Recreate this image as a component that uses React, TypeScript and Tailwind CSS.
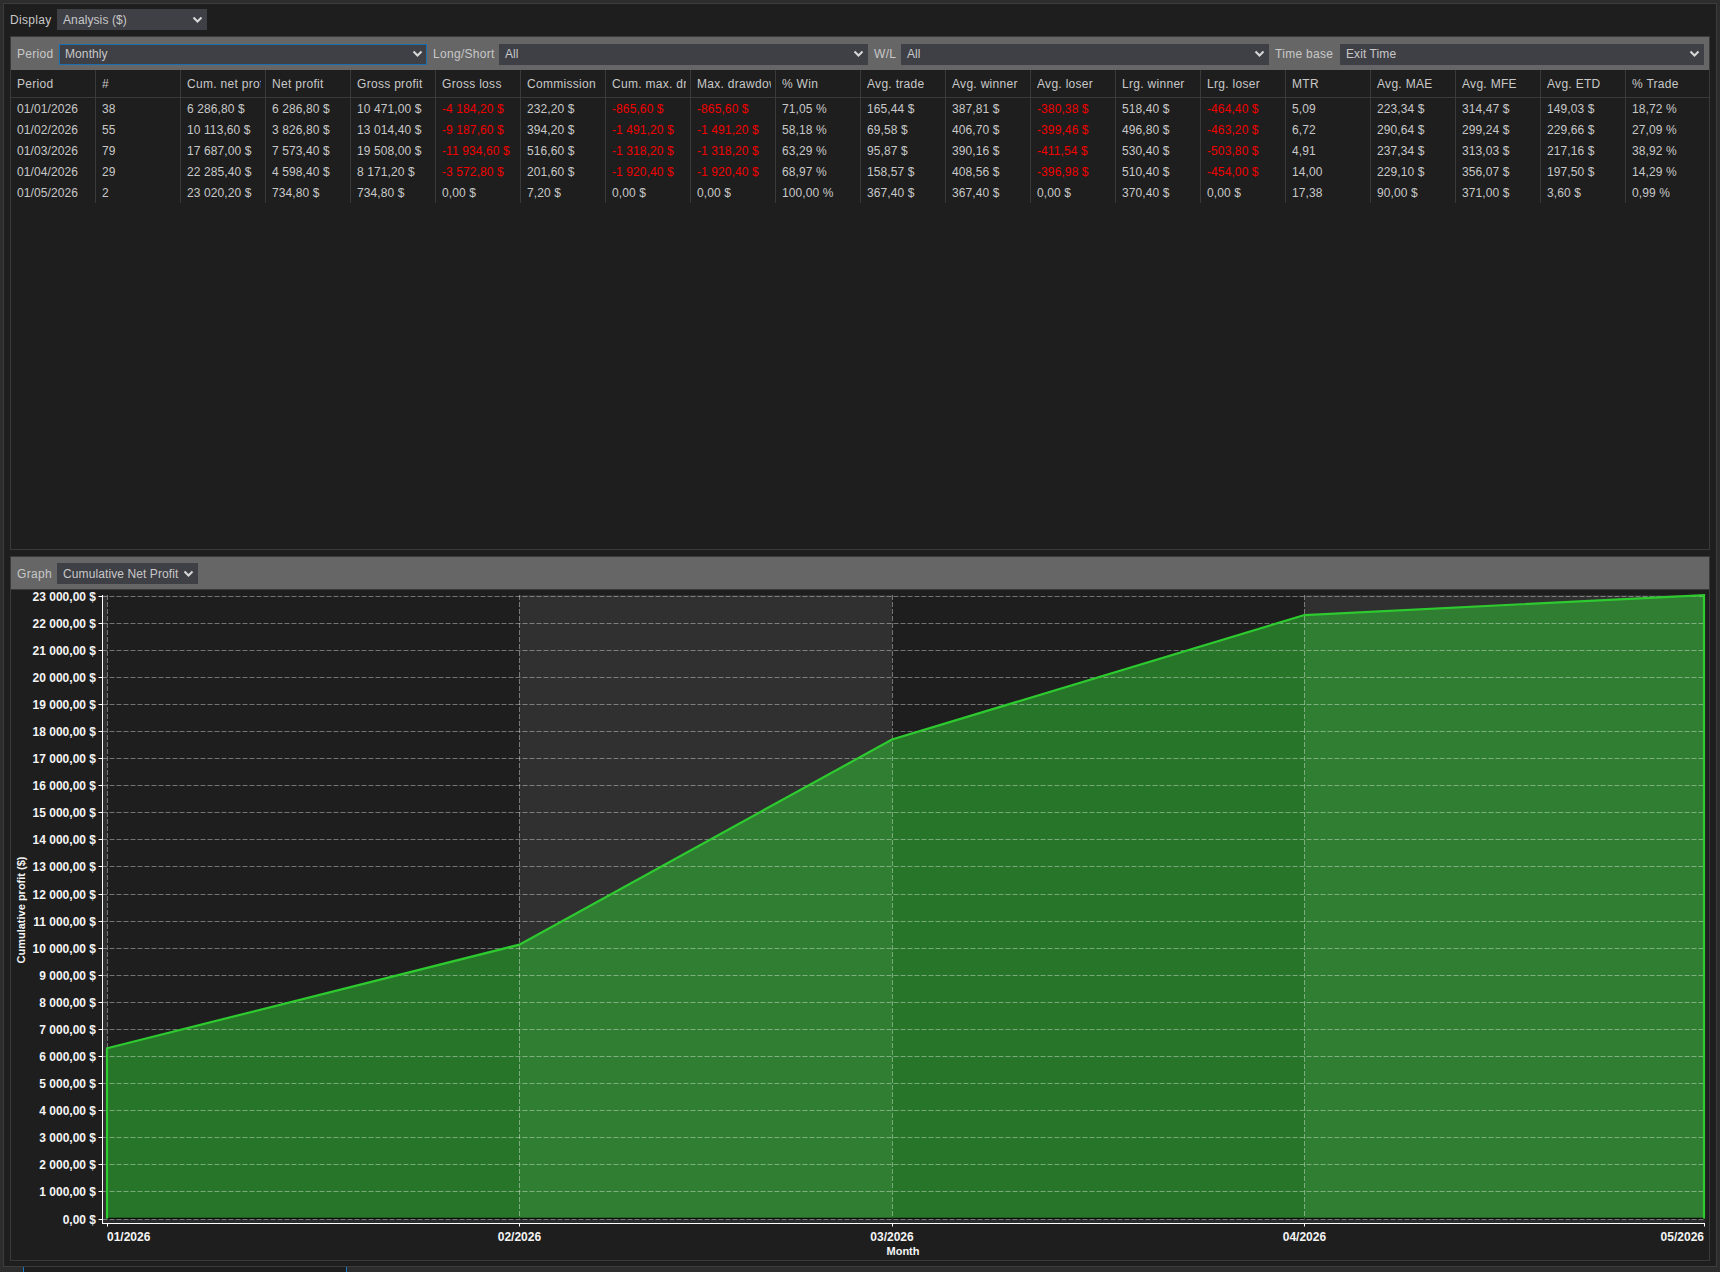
import React from 'react';

type Cell = string;

const columns: string[] = [
    'Period', '#', 'Cum. net profit', 'Net profit', 'Gross profit', 'Gross loss', 'Commission', 'Cum. max. drawdown', 'Max. drawdown', '% Win',
    'Avg. trade', 'Avg. winner', 'Avg. loser', 'Lrg. winner', 'Lrg. loser', 'MTR', 'Avg. MAE', 'Avg. MFE', 'Avg. ETD', '% Trade',
];

const rows: Cell[][] = [
    ['01/01/2026', '38', '6 286,80 $', '6 286,80 $', '10 471,00 $', '-4 184,20 $', '232,20 $', '-865,60 $', '-865,60 $', '71,05 %', '165,44 $', '387,81 $', '-380,38 $', '518,40 $', '-464,40 $', '5,09', '223,34 $', '314,47 $', '149,03 $', '18,72 %'],
    ['01/02/2026', '55', '10 113,60 $', '3 826,80 $', '13 014,40 $', '-9 187,60 $', '394,20 $', '-1 491,20 $', '-1 491,20 $', '58,18 %', '69,58 $', '406,70 $', '-399,46 $', '496,80 $', '-463,20 $', '6,72', '290,64 $', '299,24 $', '229,66 $', '27,09 %'],
    ['01/03/2026', '79', '17 687,00 $', '7 573,40 $', '19 508,00 $', '-11 934,60 $', '516,60 $', '-1 318,20 $', '-1 318,20 $', '63,29 %', '95,87 $', '390,16 $', '-411,54 $', '530,40 $', '-503,80 $', '4,91', '237,34 $', '313,03 $', '217,16 $', '38,92 %'],
    ['01/04/2026', '29', '22 285,40 $', '4 598,40 $', '8 171,20 $', '-3 572,80 $', '201,60 $', '-1 920,40 $', '-1 920,40 $', '68,97 %', '158,57 $', '408,56 $', '-396,98 $', '510,40 $', '-454,00 $', '14,00', '229,10 $', '356,07 $', '197,50 $', '14,29 %'],
    ['01/05/2026', '2', '23 020,20 $', '734,80 $', '734,80 $', '0,00 $', '7,20 $', '0,00 $', '0,00 $', '100,00 %', '367,40 $', '367,40 $', '0,00 $', '370,40 $', '0,00 $', '17,38', '90,00 $', '371,00 $', '3,60 $', '0,99 %'],
];

// chart geometry, measured on the plot
const plotLeft = 103;
const plotRight = 1705;
const plotTop = 595;
const zeroY = 1218.5;
const axisY = 1223.5;
const axisX = 102.5;
const monthX = [107, 519.4, 892, 1304.4, 1704];
const monthLabels = ['01/2026', '02/2026', '03/2026', '04/2026', '05/2026'];
const cumulative = [6286.8, 10113.6, 17687, 22285.4, 23020.2];
const svgLeft = 11;
const svgTop = 590;

const yOf = (v: number) => zeroY - (v * (zeroY - 595.7)) / 23000;
const ticks = Array.from({ length: 24 }, (_, i) => i * 1000);
const tickLabel = (v: number) => (v === 0 ? '0,00 $' : `${v / 1000} 000,00 $`);

const Chevron = () => (
    <svg width="11" height="8" viewBox="0 0 11 8" className="shrink-0">
        <path d="M1.5 1.5 L5.5 5.5 L9.5 1.5" fill="none" stroke="#d8d8d8" strokeWidth="2" />
    </svg>
);

function Select({ label, className, active }: { label: string; className: string; active?: boolean }) {
    return (
        <div
            className={`flex h-[21px] items-center justify-between bg-[#3f3f46] text-[12px] text-[#c8c8c8] ${className} ${
                active ? 'border border-[#1a6fb0] pl-[5px] pr-[3px]' : 'pl-[6px] pr-[4px]'
            }`}
        >
            <span className="whitespace-nowrap tracking-[0.1px]">{label}</span>
            <Chevron />
        </div>
    );
}

function Label({ children, className }: { children: React.ReactNode; className: string }) {
    return <span className={`whitespace-nowrap text-[12px] tracking-[0.3px] ${className}`}>{children}</span>;
}

function Table() {
    return (
        <div className="h-[479px] w-full overflow-hidden">
            <div className="flex h-[28px] border-b border-[#3a3a3a]">
                {columns.map((c) => (
                    <div key={c} className="flex w-[85px] shrink-0 items-center border-r border-[#3a3a3a] pl-[6px] pr-[4px] text-[12px] tracking-[0.3px] text-[#c8c8c8] last:border-r-0">
                        <div className="overflow-hidden whitespace-nowrap">{c}</div>
                    </div>
                ))}
            </div>
            {rows.map((row) => (
                <div key={row[0]} className="flex h-[21px]">
                    {row.map((cell, i) => (
                        <div
                            key={i}
                            className={`flex w-[85px] shrink-0 items-center border-r border-[#3a3a3a] pl-[6px] text-[12px] tracking-[0.1px] last:border-r-0 ${
                                cell.startsWith('-') ? 'text-[#f00000]' : 'text-[#c8c8c8]'
                            }`}
                        >
                            <span className="whitespace-nowrap">{cell}</span>
                        </div>
                    ))}
                </div>
            ))}
        </div>
    );
}

function Chart() {
    const y = (v: number) => yOf(v);
    const xs = monthX;
    const line = cumulative.map((v, i) => `${xs[i]},${y(v)}`).join(' ');
    const area = `${xs[0]},${zeroY} ${line} ${xs[4]},${zeroY}`;
    return (
        <svg width="1698" height="670" viewBox={`${svgLeft} ${svgTop} 1698 670`} className="block" fontFamily="'Liberation Sans', Arial, sans-serif">
            {/* alternating month bands */}
            <rect x={xs[1]} y={plotTop} width={xs[2] - xs[1]} height={axisY - plotTop} fill="#303030" />
            <rect x={xs[3]} y={plotTop} width={plotRight - xs[3]} height={axisY - plotTop} fill="#303030" />
            <rect x={plotLeft} y={plotTop} width={xs[0] - plotLeft} height={axisY - plotTop} fill="#303030" />
            <rect x={plotLeft} y={zeroY} width={plotRight - plotLeft} height={axisY - zeroY} fill="#2c2c2c" />

            {/* green area */}
            <polygon points={area} fill="#30cc32" fillOpacity="0.5" />
            <line x1={xs[0]} y1={zeroY} x2={xs[4]} y2={zeroY} stroke="#0c0c0c" strokeWidth="1.5" />

            {/* grid */}
            {ticks.map((t) => (
                <line key={t} x1={axisX} x2={plotRight - 1} y1={Math.round(y(t)) + 0.5} y2={Math.round(y(t)) + 0.5} stroke="#ffffff" strokeOpacity="0.38" strokeDasharray="5 2" />
            ))}
            {xs.slice(0, 4).map((x) => (
                <line key={x} x1={Math.round(x) + 0.5} x2={Math.round(x) + 0.5} y1={plotTop} y2={zeroY} stroke="#ffffff" strokeOpacity="0.38" strokeDasharray="5 2" />
            ))}

            {/* profit line */}
            <polyline points={`${xs[0]},${zeroY} ${line} ${xs[4]},${zeroY}`} fill="none" stroke="#2ecb30" strokeWidth="2.2" />

            {/* axes */}
            <line x1={axisX} x2={axisX} y1={plotTop} y2={axisY + 0.5} stroke="#ffffff" />
            <line x1={axisX} x2={plotRight} y1={axisY} y2={axisY} stroke="#ffffff" />
            {ticks.map((t) => (
                <line key={t} x1={axisX - 4} x2={axisX} y1={Math.round(y(t)) + 0.5} y2={Math.round(y(t)) + 0.5} stroke="#ffffff" />
            ))}
            {xs.map((x, i) => (
                <line key={x} x1={i === 4 ? x + 0.5 : Math.round(x) + 0.5} x2={i === 4 ? x + 0.5 : Math.round(x) + 0.5} y1={axisY} y2={axisY + 3} stroke="#ffffff" />
            ))}

            {/* labels */}
            {ticks.map((t) => (
                <text key={t} x={96} y={y(t) + 5} textAnchor="end" fontSize="12" fontWeight="700" fill="#f4f4f4">
                    {tickLabel(t)}
                </text>
            ))}
            {monthLabels.map((m, i) => (
                <text key={m} x={xs[i]} y={1240.5} textAnchor={i === 0 ? 'start' : i === 4 ? 'end' : 'middle'} fontSize="12" fontWeight="700" fill="#f4f4f4">
                    {m}
                </text>
            ))}
            <text x={903} y={1255} textAnchor="middle" fontSize="11" fontWeight="700" fill="#f4f4f4">
                Month
            </text>
            <text transform="translate(25 910) rotate(-90)" textAnchor="middle" fontSize="11" fontWeight="700" fill="#f4f4f4">
                Cumulative profit ($)
            </text>
        </svg>
    );
}

export default function App() {
    return (
        <div className="flex h-[1272px] w-[1720px] flex-col overflow-hidden bg-[#2d2d2d] font-['Liberation_Sans',Arial,sans-serif] text-[#c8c8c8]">
            <div className="mx-[3px] mt-[3px] h-[1264px] border border-[#3c3c3c] bg-[#1e1e1e] pl-[6px] pr-[6px]">
                <div className="mb-[1px] flex h-[31px] items-center">
                    <Label className="w-[47px]">Display</Label>
                    <Select label="Analysis ($)" className="w-[150px]" />
                </div>

                <div className="w-[1700px] border border-[#3a3a3a]">
                    <div className="flex h-[33px] items-center gap-[6px] bg-[#666666] pl-[6px] pr-[5px] pt-[1px]">
                        <Label className="w-[36px]">Period</Label>
                        <Select label="Monthly" className="w-[368px]" active />
                        <Label className="w-[60px]">Long/Short</Label>
                        <Select label="All" className="w-[369px]" />
                        <Label className="w-[21px]">W/L</Label>
                        <Select label="All" className="w-[368px]" />
                        <Label className="w-[59px]">Time base</Label>
                        <Select label="Exit Time" className="grow" />
                    </div>
                    <Table />
                </div>

                <div className="mt-[6px] w-[1700px] border border-[#3a3a3a]">
                    <div className="flex h-[33px] items-center gap-[6px] border-b border-[#3a3a3a] bg-[#666666] pl-[6px] pt-[1px]">
                        <Label className="w-[34px]">Graph</Label>
                        <Select label="Cumulative Net Profit" className="w-[141px]" />
                    </div>
                    <Chart />
                </div>
            </div>
            <div className="flex h-[5px]">
                <div className="ml-[23px] w-[324px] border-x border-[#1478c8] bg-[#1e1e1e]" />
            </div>
        </div>
    );
}
